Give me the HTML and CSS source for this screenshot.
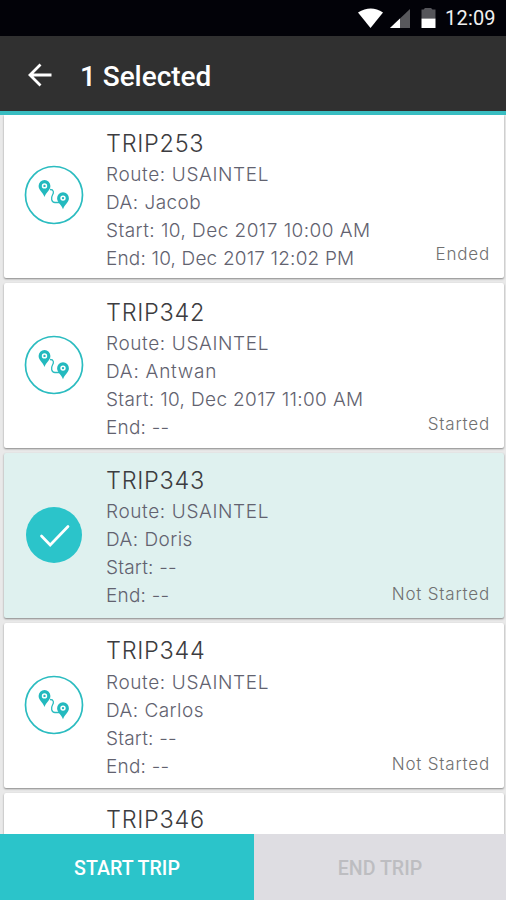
FILE: index.html
```html
<!DOCTYPE html>
<html lang="en">
<head>
<meta charset="utf-8">
<title>Trips</title>
<link rel="stylesheet" href="styles.css">
</head>
<body>
<svg class="defs" aria-hidden="true">
  <symbol id="route" viewBox="0 0 60 60">
    <circle cx="30" cy="30" r="28.5" fill="none" stroke="#2bbcc0" stroke-width="1.7"/>
    <path d="M26 24.5c4 0 4 3 2.500 5.500s-1.500 7.500 2.500 7.500h6" fill="none" stroke="#2bbcc0" stroke-width="1.300"/>
    <path fill="#23b9be" fill-rule="evenodd" d="M20.500 15.100a5.900 5.900 0 0 0-5.900 5.900c0 4 4.200 6 5.900 11 1.700-5 5.900-7 5.900-11a5.900 5.900 0 0 0-5.900-5.900zm0 3.100a2.700 2.700 0 1 1 0 5.400 2.700 2.700 0 0 1 0-5.400zM39 27.300a5.900 5.900 0 0 0-5.900 5.900c0 4 4.200 6 5.900 11 1.700-5 5.900-7 5.900-11a5.900 5.900 0 0 0-5.900-5.900zm0 3.100a2.700 2.700 0 1 1 0 5.400 2.700 2.700 0 0 1 0-5.400z"/>
    <circle cx="20.500" cy="20.900" r="1.200" fill="#23b9be"/><circle cx="39" cy="33.100" r="1.200" fill="#23b9be"/>
  </symbol>
</svg>
<div class="screen">
  <div class="statusbar">
    <svg class="signals" width="82" height="24" viewBox="0 0 82 24">
      <path d="M0 4.500Q13 -3.500 25 4.500L12.500 20z" fill="#fff"/>
      <path d="M52 1v19H32z" fill="#58585c"/><path d="M42 10.500V20H32z" fill="#fff"/>
      <path d="M67 0h6l1.500 1.500h3v9h-14v-9h2z" fill="#55555a"/><path d="M63.500 10.500h14V20h-14z" fill="#fff"/>
    </svg>
    <span class="clock">12:09</span>
  </div>
  <header class="appbar">
    <svg class="back" width="26" height="26" viewBox="0 0 26 26"><path d="M24.500 13H3M13.500 2.500L3 13l10.500 10.500" fill="none" stroke="#fff" stroke-width="2.800"/></svg>
    <h1>1 Selected</h1>
  </header>
  <main class="list">
    <article class="card first">
      <svg class="icon"><use href="#route"/></svg>
      <div class="info"><h2>TRIP253</h2><p class="route">Route: USAINTEL</p><p>DA: Jacob</p><p>Start: 10, Dec 2017 10:00 AM</p><p class="finish">End: 10, Dec 2017 12:02 PM</p></div>
      <span class="state">Ended</span>
    </article>
    <article class="card second">
      <svg class="icon"><use href="#route"/></svg>
      <div class="info"><h2>TRIP342</h2><p class="route">Route: USAINTEL</p><p class="wide">DA: Antwan</p><p class="begin">Start: 10, Dec 2017 11:00 AM</p><p class="blank">End: --</p></div>
      <span class="state">Started</span>
    </article>
    <article class="card selected">
      <svg class="icon" viewBox="0 0 60 60"><circle cx="30" cy="30" r="28" fill="#2bc4ca"/><path d="M17.500 31l8.700 9L44 21.500" fill="none" stroke="#fff" stroke-width="2.700" stroke-linecap="round"/></svg>
      <div class="info"><h2>TRIP343</h2><p class="route">Route: USAINTEL</p><p>DA: Doris</p><p class="blank">Start: --</p><p class="blank">End: --</p></div>
      <span class="state">Not Started</span>
    </article>
    <article class="card fourth">
      <svg class="icon"><use href="#route"/></svg>
      <div class="info"><h2>TRIP344</h2><p class="route">Route: USAINTEL</p><p>DA: Carlos</p><p class="blank">Start: --</p><p class="blank">End: --</p></div>
      <span class="state">Not Started</span>
    </article>
    <article class="card">
      <span class="icon"></span>
      <div class="info"><h2>TRIP346</h2></div>
    </article>
  </main>
  <footer class="actions">
    <button class="start">START TRIP</button>
    <button class="end" disabled>END TRIP</button>
  </footer>
</div>
</body>
</html>
```
FILE: styles.css
```css
* { box-sizing: border-box; }
body { margin: 0; background: #e9e9e9; }
h1, h2, p { margin: 0; }
.defs { position: absolute; width: 0; height: 0; }
.screen { width: 506px; height: 900px; display: flex; flex-direction: column; overflow: hidden; }
.statusbar { flex: none; height: 36px; background: #020208; display: flex; align-items: flex-start; justify-content: flex-end; padding-right: 10px; }
.signals { margin: 8px 5px 0 0; }
.clock { width: 51px; font: 400 20px/37px Roboto, sans-serif; letter-spacing: .2px; color: #f0f0f0; white-space: nowrap; }
.appbar { flex: none; height: 79px; background: #303030; border-bottom: 4px solid #38bdc1; display: flex; align-items: center; padding: 2px 0 0 27px; }
.back { flex: none; }
h1 { margin-left: 27px; padding-top: 4px; font: 500 28px/36px Roboto, sans-serif; letter-spacing: -.05px; color: #fff; }
.list { flex: 1; min-height: 0; overflow: hidden; padding: 0 2px 0 4px; background: #e9e9e9; display: flex; flex-direction: column; }
.card { flex: none; display: flex; height: 165px; margin-bottom: 5px; background: #fff; border-radius: 2px; box-shadow: 0 1px 2px rgba(0,0,0,.42); }
.first { height: 163px; border-radius: 0 0 2px 2px; }
.selected { background: #dff1ef; }
.icon { flex: none; width: 60px; height: 60px; margin: 52px 0 0 20px; }
.first .icon { margin-top: 50px; }
.info { flex: 1; min-width: 0; margin-left: 22px; padding-top: 11px; font-family: Inter, sans-serif; white-space: nowrap; }
.first .info, .selected .info, .fourth .info { padding-top: 12px; }
.first .info { padding-top: 13px; }
.second .info { padding-top: 14px; }
h2 { font-size: 23.5px; line-height: 32px; font-weight: 300; color: #3c3c40; letter-spacing: .7px; }
.info p { font-size: 19px; line-height: 28px; font-weight: 300; color: #62626f; letter-spacing: .45px; }
.info h2 + p { margin-top: 1px; }
.fourth h2 + p { margin-top: 2px; }
.info .route { letter-spacing: .62px; }
.info .wide { letter-spacing: .75px; }
.info .begin { letter-spacing: .35px; }
.info .finish { letter-spacing: .17px; }
.info .blank { letter-spacing: .2px; }
.state { align-self: flex-end; margin: 0 14px 11px 0; font: 300 17px/26px Inter, sans-serif; letter-spacing: .8px; color: #707070; white-space: nowrap; }
.actions { flex: none; display: flex; height: 66px; }
.actions button { border: 0; padding: 4px 0 0; width: 252px; font: 500 19.6px/24px Roboto, sans-serif; }
.actions .start { width: 254px; background: #2bc4ca; color: #fff; }
.actions .end { background: #dedde2; color: #bdbdc1; }
```
